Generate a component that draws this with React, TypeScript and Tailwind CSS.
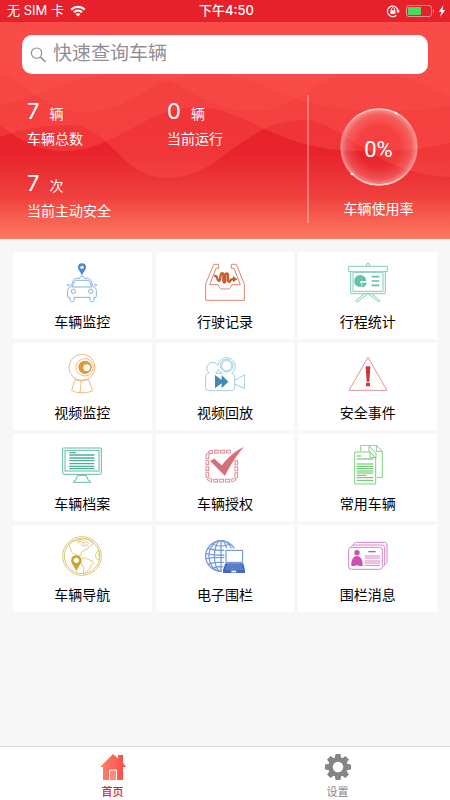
import React from 'react';

const CarIcon = () => (
  <svg viewBox="0 0 120 120" className="h-10 w-10" fill="none" stroke="#6fa3dc" strokeWidth="2.5" aria-hidden="true">
    <path d="M60 1a12 12 0 0 1 12 12c0 9-9 14-12 26c-3-12-12-17-12-26a12 12 0 0 1 12-12z" fill="#4a8ad0" stroke="none" />
    <circle cx="60" cy="13" r="5" fill="#fff" stroke="none" />
    <path d="M53 46c0-4 3-6 7-6s7 2 7 6h10c5 0 8 3 10 8l6 17c6 2 10 6 10 12v18c0 2-2 2-3 2h-4v9c0 6-12 6-12 0v-9H36v9c0 6-12 6-12 0v-9h-4c-2 0-3 0-3-2V83c0-6 4-10 10-12l6-17c2-5 5-8 10-8z" />
    <path d="M43 52h34c3 0 5 2 6 4l6 16H31l6-16c1-3 3-4 6-4z" />
    <circle cx="34" cy="85" r="6.5" />
    <circle cx="86" cy="85" r="6.5" />
    <path d="M21 70l-5-3c-1-2 1-4 4-3l4 2M99 70l5-3c1-2-1-4-4-3l-4 2" />
  </svg>
);

const TrayIcon = () => (
  <svg viewBox="0 0 120 120" className="h-10 w-10" fill="none" stroke="#d98a6f" strokeWidth="3" aria-hidden="true">
    <path d="M26 4h15v12h-8L14 65h25c4 8 5 13 12 13h18c7 0 8-5 12-13h25L87 16h-8V4h15l24 59v49H2V63z" />
    <path d="M27 39c6-2 9 2 10 8s6 10 8 3l2-14c1-7 8-7 8 0v18c0 6 6 6 6 0V36c0-6 8-6 8 0v16c0 6 6 6 7 1s5-5 12-5" stroke="#c65f36" strokeWidth="7" />
    <path d="M84 39l13 10l-13 9z" fill="#c65f36" stroke="none" />
  </svg>
);

const ChartIcon = () => (
  <svg viewBox="0 0 120 120" className="h-10 w-10" fill="none" stroke="#7fcdbb" strokeWidth="3" aria-hidden="true">
    <path d="M56 10V2h8v8M2 10h116v16H2zM8 26v66h104V26M15 28v57h90V28z" />
    <path d="M50 92l-26 20c-1 4 3 6 6 3l30-23l30 23c4 3 7 0 5-3L70 92" />
    <path d="M36 36a18 18 0 1 0 17 26l-16-1V54h18a18 18 0 0 0-19-18z" fill="#62c0ab" stroke="none" />
    <path d="M41 58h16c0 9-7 16-16 16z" fill="#62c0ab" stroke="#fff" strokeWidth="2" />
    <path d="M71 41h23M71 54h23M71 67h23" stroke="#62c0ab" strokeWidth="5" />
  </svg>
);

const WebcamIcon = () => (
  <svg viewBox="0 0 120 120" className="h-10 w-10" fill="none" stroke="#e6b066" strokeWidth="2.5" aria-hidden="true">
    <circle cx="60" cy="40" r="39" />
    <circle cx="68" cy="40" r="26" />
    <circle cx="69" cy="40" r="20" fill="#e09a3d" stroke="none" />
    <circle cx="74" cy="41" r="10" fill="#fff" stroke="none" />
    <path d="M39 76l-10 33c8 5 17 7 25 7l4-35M54 116c14 1 27-1 38-6L79 76M39 76c13 6 27 6 40 0" />
  </svg>
);

const CameraIcon = () => (
  <svg viewBox="0 0 120 120" className="h-10 w-10" fill="none" stroke="#a6cbdc" strokeWidth="3" aria-hidden="true">
    <path d="M12 57a18 18 0 1 1 27-23a26 26 0 1 1 41 24c6 1 9 5 9 11v31c0 6-4 10-10 10H12c-6 0-10-4-10-10V69c0-7 4-11 10-12z" />
    <circle cx="65" cy="35" r="19" />
    <circle cx="65" cy="35" r="15" />
    <path d="M32 58c4-3 6-7 8-12c3 6 7 10 12 12zM89 79l30-17v42L89 90" />
    <path d="M30 63l20 15V63l20 20l-20 20V88l-20 15z" fill="#4289b5" stroke="none" />
  </svg>
);

const AlertIcon = () => (
  <svg viewBox="0 0 120 120" className="h-10 w-10" fill="none" stroke="#dc7f7f" strokeWidth="2.5" aria-hidden="true">
    <path d="M60 10l57 99H3z" />
    <path d="M53 37h14l-3 46h-8zM54 86h12v11H54z" fill="#c93636" stroke="none" />
  </svg>
);

const MonitorIcon = () => (
  <svg viewBox="0 0 120 120" className="h-10 w-10" fill="none" stroke="#62b9a7" strokeWidth="3" aria-hidden="true">
    <rect x="2" y="9" width="116" height="79" rx="3" />
    <rect x="9" y="16" width="102" height="62" />
    <path d="M47 91l-6 15l-7 3v3h52v-3l-7-3l-6-15z" />
    <path d="M22 23h20M22 30h75M22 39h75M22 47h75M22 56h75M22 64h75M22 71h75" stroke="#4eae9a" strokeWidth="4" />
  </svg>
);

const CheckIcon = () => (
  <svg viewBox="0 0 120 120" className="h-10 w-10" fill="none" aria-hidden="true">
    <path d="M78 20H24C12 20 7 26 7 37v52c0 12 5 18 17 18h52c12 0 18-6 18-18V44" stroke="#dc8791" strokeWidth="11" strokeDasharray="15 3" />
    <path d="M78 20H24C12 20 7 26 7 37v52c0 12 5 18 17 18h52c12 0 18-6 18-18V44" stroke="#fff" strokeWidth="5" strokeDasharray="10 8" strokeDashoffset="-2" />
    <path d="M14 48l14-8l22 20C68 38 90 16 119 4C98 29 80 55 60 94z" fill="#d4707c" stroke="#fff" strokeWidth="2" />
  </svg>
);

const DocsIcon = () => (
  <svg viewBox="0 0 120 120" className="h-10 w-10" fill="none" stroke="#7fd47f" strokeWidth="3" aria-hidden="true">
    <path d="M38 19V1h47l18 18v78H86M85 1v18h18" />
    <path d="M20 21h46l17 17v79H20zM66 21v17h17" fill="#fff" />
    <path d="M63 3l21 22v16M63 3v16l17 17" />
    <path d="M26 33h14M26 42h50M26 57h50M26 64h50M26 71h50M26 78h50M26 84h50M26 91h30M26 98h50M26 106h50" stroke="#58c258" />
  </svg>
);

const WorldIcon = () => (
  <svg viewBox="0 0 120 120" className="h-10 w-10" fill="none" stroke="#d6bd62" strokeWidth="2.5" strokeLinejoin="round" aria-hidden="true">
    <circle cx="60" cy="60" r="58" />
    <circle cx="60" cy="60" r="53" />
    <path d="M21 26C22 34 27 38 27 44C29 50 34 52 38 54L46 58L58 57C60 53 55 50 60 46C66 45 68 40 74 40C80 39 76 33 82 32L90 26C94 24 97 23 94 21L86 17C82 16 84 11 78 11L70 9L64 14L58 10L48 12L40 15L30 17z" />
    <path d="M46 17L56 15L62 20L58 26L64 30L70 26L66 20L72 16L80 22L76 28L70 32M52 22L48 18" />
    <path d="M62 66c6-2 11 0 15 4c4-1 7 1 9 4c6 0 9 4 8 7l-7 8l-4 10l-8 7l-6 8l-5-3l2-15l-7-12c-2-8-1-12 3-18z" />
    <path d="M108 43c-5 5-7 12-7 17c0 7 4 10 9 12l3-9c-3-4-4-8-1-12z" />
    <path d="M43 57a16 16 0 0 1 16 16c0 12-10 17-16 35c-6-18-16-23-16-35a16 16 0 0 1 16-16z" fill="#c9a42e" stroke="#fff" strokeWidth="1" />
    <circle cx="43" cy="73" r="8" fill="#fff" stroke="none" />
  </svg>
);

const FenceIcon = () => (
  <svg viewBox="0 0 120 120" className="h-10 w-10" fill="none" stroke="#7d9cdb" strokeWidth="4" aria-hidden="true">
    <circle cx="48" cy="60" r="46" />
    <ellipse cx="48" cy="60" rx="36" ry="46" />
    <ellipse cx="48" cy="60" rx="20" ry="46" />
    <path d="M48 14v92M20 24c18 8 38 8 56 0M9 37c24 8 54 8 78 0M3 53c28 6 62 6 90 0M3 68c28-5 62-5 90 0M9 84c24-7 54-7 78 0M20 97c18-7 38-7 56 0" />
    <path d="M60 39h55v40l5 24v8H53v-8l7-22z" fill="#fff" stroke="#fff" strokeWidth="4" />
    <path d="M63 43h50v36H63z" fill="#fff" stroke="#5e84cf" strokeWidth="3" />
    <path d="M61 82h54l5 20v9H54v-9z" fill="#4169c2" stroke="none" />
    <path d="M66 87h45M64 93h48M62 99h52" stroke="#b4c5e8" strokeWidth="2" strokeDasharray="4 2" />
    <path d="M79 104h15v5H79z" fill="#fff" stroke="none" />
  </svg>
);

const IdCardIcon = () => (
  <svg viewBox="0 0 120 120" className="h-10 w-10" fill="none" stroke="#da82c6" strokeWidth="3" aria-hidden="true">
    <path d="M17 27c0-5 3-8 8-8h84c5 0 8 3 8 8v49c0 5-3 8-8 8M10 33c0-4 3-6 8-6h84c5 0 8 3 8 8v50c0 4-2 6-6 7" />
    <rect x="2" y="34" width="101" height="66" rx="8" fill="#fff" />
    <circle cx="27" cy="50" r="8" fill="#cc51ae" stroke="none" />
    <path d="M27 60c9 0 17 9 17 24v6H34c-3-3-11-3-14 0H10v-6c0-15 8-24 17-24z" fill="#cc51ae" stroke="none" />
    <path d="M61 47h22" stroke="#cc51ae" strokeWidth="4" />
    <path d="M50 60h46M50 66h46M50 75h46M50 81h46M50 88h46" />
  </svg>
);

const menuItems = [
  { label: '车辆监控', Icon: CarIcon },
  { label: '行驶记录', Icon: TrayIcon },
  { label: '行程统计', Icon: ChartIcon },
  { label: '视频监控', Icon: WebcamIcon },
  { label: '视频回放', Icon: CameraIcon },
  { label: '安全事件', Icon: AlertIcon },
  { label: '车辆档案', Icon: MonitorIcon },
  { label: '车辆授权', Icon: CheckIcon },
  { label: '常用车辆', Icon: DocsIcon },
  { label: '车辆导航', Icon: WorldIcon },
  { label: '电子围栏', Icon: FenceIcon },
  { label: '围栏消息', Icon: IdCardIcon },
];

const StatusBar = () => (
  <div className="grid h-[22px] grid-cols-3 items-center bg-[#e6212a] pr-1 pl-[7px] text-[13px] text-white">
    <div className="flex items-center gap-1.5">
      <span>无 SIM 卡</span>
      <svg viewBox="0 0 16 12" className="h-3 w-4" fill="none" stroke="#fff" strokeWidth="2.2" aria-hidden="true">
        <path d="M1.2 4.6c3.8-3.6 9.8-3.6 13.6 0M3.9 7.3c2.4-2.2 5.8-2.2 8.2 0" />
        <path d="M8 11.6L5.6 9.2c1.4-1.2 3.4-1.2 4.8 0z" fill="#fff" stroke="none" />
      </svg>
    </div>
    <div className="text-center font-medium">下午4:50</div>
    <div className="flex items-center justify-end gap-1">
      <svg viewBox="0 0 14 14" className="mr-0.5 h-3.5 w-3.5" fill="none" stroke="#fff" aria-hidden="true">
        <path d="M10.3 11.2A5.3 5.3 0 1 1 12 7.4" strokeWidth="1.2" />
        <path d="M10 6.4h4l-2 2.8z" fill="#fff" stroke="none" />
        <path d="M4.400 6.300h5v3.600h-5z" fill="#fff" stroke="none" />
        <path d="M5.400 6.500V5.200c0-2 3-2 3 0v1.300" />
      </svg>
      <svg viewBox="0 0 28 12" className="h-3 w-7" fill="none" aria-hidden="true">
        <rect x="0.5" y="0.5" width="25" height="11" rx="2.5" stroke="#f28f94" />
        <rect x="2" y="2" width="13" height="8" rx="1" fill="#4cd964" />
        <path d="M27 4c1.300.5 1.300 3.500 0 4z" fill="#f28f94" />
      </svg>
      <svg viewBox="0 0 8 12" className="h-3 w-2" aria-hidden="true">
        <path d="M5.500 0L.8 6.800h2.700L2 12l5.200-7H4.400z" fill="#fff" />
      </svg>
    </div>
  </div>
);

const Waves = () => (
  <svg viewBox="0 0 450 217" preserveAspectRatio="none" className="absolute inset-0 h-full w-full" aria-hidden="true">
    <defs>
      <linearGradient id="base" x1="0" y1="0" x2="0" y2="1">
        <stop offset="0" stopColor="#e6202a" />
        <stop offset="0.6" stopColor="#e8232c" />
        <stop offset="0.8" stopColor="#ef3f3d" />
        <stop offset="1" stopColor="#ff7a62" />
      </linearGradient>
    </defs>
    <rect width="450" height="217" fill="url(#base)" />
    <g fill="#ff5a52">
      <path opacity="0.34" d="M0 0V103C20 119 40 129 65 129C115 129 145 85 198 85C250 87 275 129 360 129C400 129 425 127 450 121V0z" />
      <path opacity="0.34" d="M0 0V115C22 107 45 103 70 103C110 103 120 156 168 156C220 156 245 98 302 98C345 98 370 152 450 155V0z" />
      <path opacity="0.25" d="M0 0V83C40 77 60 54 130 50C185 53 200 89 252 89C300 89 310 53 360 49C400 51 420 58 450 75V0z" />
      <path opacity="0.25" d="M0 0V50C25 56 40 90 85 90C135 90 150 51 210 51C265 53 290 88 370 88C405 90 430 87 450 84V0z" />
    </g>
  </svg>
);

interface StatProps {
  value: number;
  unit: string;
  label: string;
}

const Stat: React.FC<StatProps> = ({ value, unit, label }) => (
  <div>
    <div className="flex items-baseline gap-2.5">
      <span className="text-[22px] leading-8">{value}</span>
      <span className="text-sm">{unit}</span>
    </div>
    <div className="mt-0.5 text-sm">{label}</div>
  </div>
);

const UsageRing = () => (
  <div className="flex flex-col items-center">
    <div className="relative flex h-20 w-20 items-center justify-center">
      <svg viewBox="0 0 80 80" className="absolute inset-0 h-full w-full" fill="none" aria-hidden="true">
        <defs>
          <radialGradient id="glow">
            <stop offset="0.55" stopColor="#fff" stopOpacity="0" />
            <stop offset="0.85" stopColor="#fff" stopOpacity="0.15" />
            <stop offset="1" stopColor="#fff" stopOpacity="0.42" />
          </radialGradient>
          <linearGradient id="rim" x1="0" y1="0" x2="0" y2="1">
            <stop offset="0" stopColor="#ffd3c4" />
            <stop offset="0.3" stopColor="#f99" stopOpacity="0.7" />
            <stop offset="0.7" stopColor="#f99" stopOpacity="0.7" />
            <stop offset="1" stopColor="#ffd3c4" />
          </linearGradient>
        </defs>
        <circle cx="40" cy="40" r="38" fill="url(#glow)" stroke="url(#rim)" strokeWidth="1.5" />
        <circle cx="57" cy="6" r="1.3" fill="#fff" />
        <circle cx="13" cy="67" r="1.3" fill="#fff" />
      </svg>
      <span className="relative pt-1 font-[Roboto,sans-serif] text-[22px]">0%</span>
    </div>
    <div className="mt-3 text-sm">车辆使用率</div>
  </div>
);

const TabBar = () => (
  <nav className="mt-auto grid h-[54px] grid-cols-2 border-t border-[#d8d8d8] bg-white text-[11px] leading-4">
    <button type="button" className="flex flex-col items-center gap-[3px] pt-1.5 font-medium text-[#e0212f]">
      <svg viewBox="0 0 26 28" className="h-7 w-[26px]" aria-hidden="true">
        <defs>
          <linearGradient id="house" x1="0" y1="0" x2="1" y2="0">
            <stop offset="0" stopColor="#ff8369" />
            <stop offset="1" stopColor="#f94a4b" />
          </linearGradient>
        </defs>
        <path d="M13 1l5 4.500V2h5v8l3 4h-3v13H3V14H0z" fill="url(#house)" />
        <path d="M9.500 27V17h7v10" fill="#ff8975" stroke="#fff" strokeWidth="1" />
      </svg>
      首页
    </button>
    <button type="button" className="flex flex-col items-center gap-[3px] pt-1.5 text-[#888]">
      <svg viewBox="0 0 28 28" className="h-7 w-7" aria-hidden="true">
        <g fill="#858585">
          <path id="tooth" d="M11.500 1h5l1 6h-7zM11.500 27h5l1-6h-7z" />
          <use href="#tooth" transform="rotate(45 14 14)" />
          <use href="#tooth" transform="rotate(90 14 14)" />
          <use href="#tooth" transform="rotate(135 14 14)" />
        </g>
        <circle cx="14" cy="14" r="7.500" fill="#fff" stroke="#858585" strokeWidth="4.500" />
      </svg>
      设置
    </button>
  </nav>
);

const App: React.FC = () => (
  <div className="flex min-h-screen flex-col bg-[#f7f7f7] font-[Inter,'Noto_Sans_CJK_SC',sans-serif]">
    <StatusBar />

    <header className="relative">
      <Waves />
      <div className="relative px-[22px] pt-[13px] pb-4 text-white">
        <label className="flex h-[39px] items-center gap-1.5 rounded-[10px] bg-white px-2">
          <svg viewBox="0 0 18 18" className="h-[18px] w-[18px]" fill="none" stroke="#8e8e93" strokeWidth="1.2" aria-hidden="true">
            <circle cx="7" cy="7" r="5.500" />
            <path d="M11 11l5.500 5.500" strokeWidth="1.6" />
          </svg>
          <input
            type="search"
            aria-label="快速查询车辆"
            placeholder="快速查询车辆"
            className="w-full bg-transparent text-[19px] text-gray-800 outline-none placeholder:text-[#8e8e93]"
          />
        </label>

        <div className="mt-[21px] flex">
          <div className="grid flex-1 grid-cols-2 content-start gap-y-[18px] pl-[5px]">
            <Stat value={7} unit="辆" label="车辆总数" />
            <Stat value={0} unit="辆" label="当前运行" />
            <Stat value={7} unit="次" label="当前主动安全" />
          </div>
          <div className="flex h-32 w-[121px] justify-center border-l-2 border-white/30 pt-3 pl-5">
            <UsageRing />
          </div>
        </div>
      </div>
    </header>

    <main className="grid grid-cols-3 gap-1 p-[13px]">
      {menuItems.map(({ label, Icon }) => (
        <button key={label} type="button" className="flex h-[87px] flex-col items-center gap-[9px] bg-white pt-[11px] text-sm text-black">
          <Icon />
          {label}
        </button>
      ))}
    </main>

    <TabBar />
  </div>
);

export default App;
